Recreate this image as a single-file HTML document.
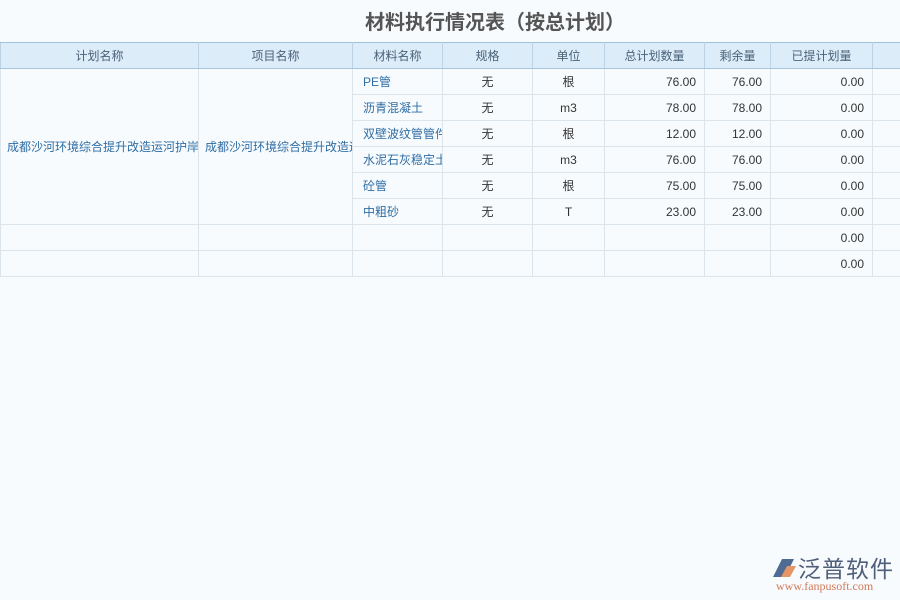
<!DOCTYPE html>
<html><head><meta charset="utf-8"><style>
body{margin:0;width:900px;height:600px;background:#f8fbfd;font-family:"Liberation Sans","Noto Sans CJK SC",sans-serif;position:relative;overflow:hidden}
.t{position:absolute;left:0;width:990px;top:6px;text-align:center;font-size:20px;font-weight:bold;color:#555}
table{position:absolute;top:42px;left:0;width:900px;border-collapse:collapse;table-layout:fixed;font-size:12px}
td,th{height:25px;border:1px solid #dde5ec;padding:0 8px;white-space:nowrap;overflow:hidden;color:#333;font-weight:normal}
th{background:#dcecf9;color:#4a6278;border-color:#bcd3e6;border-top:1px solid #9ec1dc}
tr:first-child th{border-bottom:1px solid #a9c6de}
.b{color:#2e6da4;text-align:left;padding:0 10px}
.c{text-align:center}.r{text-align:right}
.m{color:#2e6da4;padding:0 6px}
.lg{position:absolute;left:770px;top:552px}
</style></head><body>
<div class="t">材料执行情况表（按总计划）</div>
<table>
<colgroup><col style="width:198px"><col style="width:154px"><col style="width:90px"><col style="width:90px"><col style="width:72px"><col style="width:100px"><col style="width:66px"><col style="width:102px"><col style="width:28px"></colgroup>
<tr><th>计划名称</th><th>项目名称</th><th>材料名称</th><th>规格</th><th>单位</th><th>总计划数量</th><th>剩余量</th><th>已提计划量</th><th></th></tr>
<tr><td rowspan="6" class="m">成都沙河环境综合提升改造运河护岸综合</td><td rowspan="6" class="m">成都沙河环境综合提升改造运河</td><td class="b">PE管</td><td class="c">无</td><td class="c">根</td><td class="r">76.00</td><td class="r">76.00</td><td class="r">0.00</td><td></td></tr>
<tr><td class="b">沥青混凝土</td><td class="c">无</td><td class="c">m3</td><td class="r">78.00</td><td class="r">78.00</td><td class="r">0.00</td><td></td></tr>
<tr><td class="b">双壁波纹管管件</td><td class="c">无</td><td class="c">根</td><td class="r">12.00</td><td class="r">12.00</td><td class="r">0.00</td><td></td></tr>
<tr><td class="b">水泥石灰稳定土</td><td class="c">无</td><td class="c">m3</td><td class="r">76.00</td><td class="r">76.00</td><td class="r">0.00</td><td></td></tr>
<tr><td class="b">砼管</td><td class="c">无</td><td class="c">根</td><td class="r">75.00</td><td class="r">75.00</td><td class="r">0.00</td><td></td></tr>
<tr><td class="b">中粗砂</td><td class="c">无</td><td class="c">T</td><td class="r">23.00</td><td class="r">23.00</td><td class="r">0.00</td><td></td></tr>
<tr><td></td><td></td><td></td><td></td><td></td><td></td><td></td><td class="r">0.00</td><td></td></tr>
<tr><td></td><td></td><td></td><td></td><td></td><td></td><td></td><td class="r">0.00</td><td></td></tr>
</table>
<div class="lg">
<svg width="28" height="26" style="position:absolute;left:0;top:3px"><path d="M3 22 L12 4 L24 4 L15 22 Z" fill="#4f6b93"/><path d="M11 22 L17 11 L26 11 L20 22Z" fill="#e39565"/></svg>
<div style="position:absolute;left:28px;top:-2px;font-size:23px;color:#4f5f7a;letter-spacing:1px;white-space:nowrap">泛普软件</div>
<div style="position:absolute;left:6px;top:27px;font-size:12px;color:#d07a5a;font-family:'Liberation Serif',serif;white-space:nowrap">www.fanpusoft.com</div>
</div>
</body></html>
